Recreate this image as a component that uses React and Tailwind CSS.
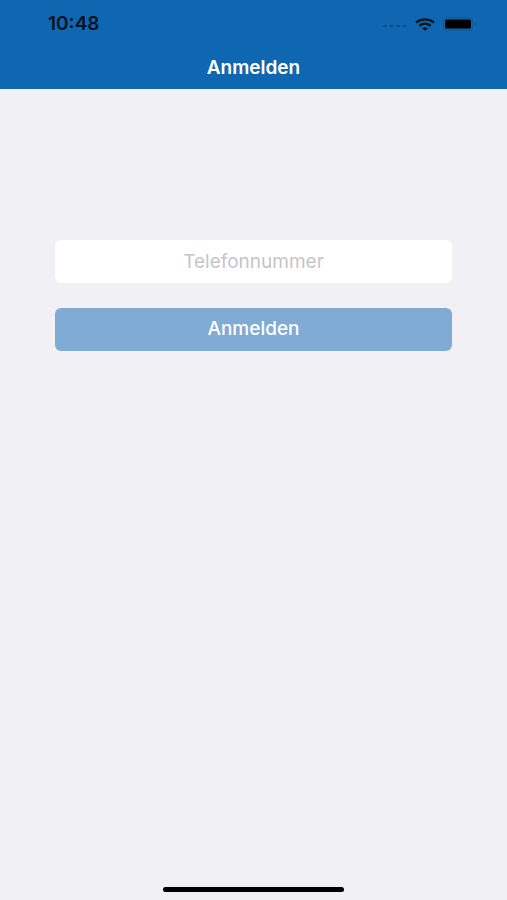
export default function App() {
  return (
    <div className="flex min-h-screen flex-col bg-[#f0f0f5] font-[Inter,sans-serif]">
      <header className="bg-[#1067b1]">
        <div className="flex h-12 items-center justify-between pr-[30px] pl-12">
          <time className="text-[19px] font-semibold text-[#04121f]">10:48</time>
          <div className="flex items-center gap-2">
            <svg width="26" height="6" viewBox="0 0 26 6" fill="#0d4d85" aria-hidden="true">
              <ellipse cx="4" cy="5" rx="2" ry="1.2" />
              <ellipse cx="10.5" cy="5" rx="2" ry="1.2" />
              <ellipse cx="17" cy="5" rx="2" ry="1.2" />
              <ellipse cx="23.5" cy="5" rx="2" ry="1.2" />
            </svg>
            <svg width="20" height="13" viewBox="0 0 20 13" fill="none" stroke="#04121f" strokeWidth="2.2" aria-hidden="true">
              <path d="M1 4.6C6 .2 14 .2 19 4.6" />
              <path d="M4.3 7.8c3.2-2.8 8.2-2.8 11.4 0" />
              <path d="M7 10.2c1.7-1.4 4.3-1.4 6 0l-3 2.6z" fill="#04121f" stroke="none" />
            </svg>
            <svg width="34" height="14" viewBox="0 0 34 14" aria-hidden="true">
              <rect x=".5" y=".8" width="29" height="12.4" rx="3" fill="none" stroke="#0d5796" />
              <rect x="2" y="2.5" width="26" height="9" rx="1.5" fill="#000" />
              <path d="M31 5c2 .6 2 3.4 0 4z" fill="#0d5796" />
            </svg>
          </div>
        </div>
        <h1 className="flex h-[41px] items-center justify-center text-[19px] font-semibold text-white">Anmelden</h1>
      </header>
      <main className="flex-1 px-[55px] pt-[151px]">
        <form className="flex flex-col gap-[25px]">
          <input type="tel" aria-label="Telefonnummer" placeholder="Telefonnummer" className="h-[43px] w-full rounded-md bg-white text-center text-[19px] outline-none placeholder:text-[#c5c5c7]" />
          <button type="button" className="h-[43px] w-full rounded-md bg-[#80abd4] text-[19px] font-medium text-white">Anmelden</button>
        </form>
      </main>
      <footer className="flex justify-center pb-2">
        <div className="h-[5px] w-[181px] rounded-full bg-black" />
      </footer>
    </div>
  );
}
